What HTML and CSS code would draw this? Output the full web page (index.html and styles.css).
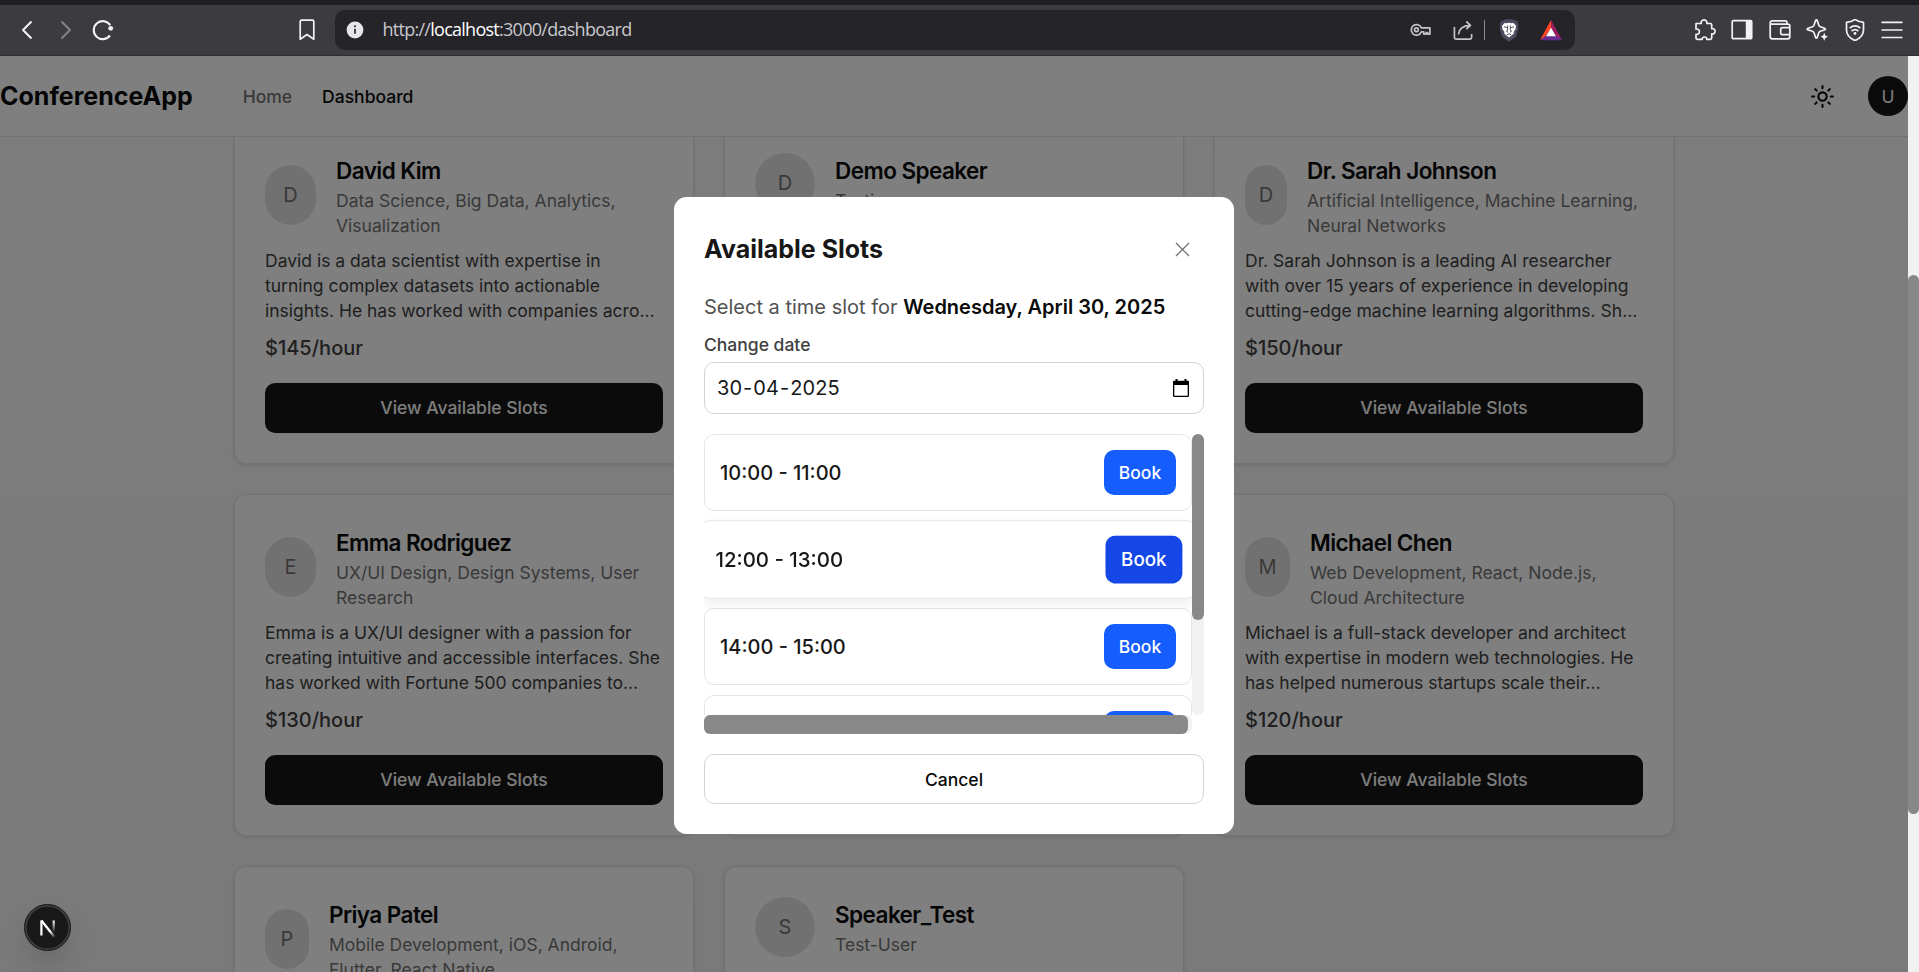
FILE: index.html
```html
<!DOCTYPE html>
<html lang="en">
<head>
<meta charset="utf-8">
<title>ConferenceApp</title>
<link rel="stylesheet" href="styles.css">
</head>
<body>
<div class="browser">
  <div class="toolbar">
    <div class="nav-icons">
      <svg class="i-back" width="12" height="20" viewBox="0 0 12 20"><path d="M10.500 1.500 2 10l8.500 8.500"/></svg>
      <svg class="i-fwd" width="12" height="20" viewBox="0 0 12 20"><path d="M1.500 1.500 10 10l-8.500 8.500"/></svg>
      <svg class="i-reload" width="22" height="22" viewBox="0 0 22 22"><path d="M18 16.500A9 9 0 1 1 18.300 6.200"/><circle cx="18.700" cy="9.300" r="2.400" class="solid"/></svg>
      <svg class="i-mark" width="16" height="22" viewBox="0 0 16 22"><path d="M1.200 2.500c0-.8.500-1.300 1.300-1.300h11c.8 0 1.300.5 1.300 1.300v17.800L8 15.500l-6.800 4.800z"/></svg>
    </div>
    <div class="urlbar">
      <svg class="i-info" width="18" height="18" viewBox="0 0 18 18"><circle cx="9" cy="9" r="8.400" fill="#e6e5ea"/><path d="M9 7.800v5" stroke="#29282d" stroke-width="1.700"/><circle cx="9" cy="5.300" r="1.050" fill="#29282d"/></svg>
      <div class="url">http://<b>localhost</b>:3000/dashboard</div>
      <div class="url-icons">
        <svg width="21" height="14" viewBox="0 0 21 14"><path d="M11.400 4.800A5.300 5.300 0 1 0 11.400 8.900h2.400v2.200h2.300V9.600h1.600v1.500h2.200V4.800z"/><circle cx="6.400" cy="6.800" r="1.900"/></svg>
        <svg class="i-share" width="21" height="21" viewBox="0 0 21 21"><path d="M1.400 7v10.500c0 1 .6 1.600 1.600 1.600h14c1 0 1.600-.6 1.600-1.600V14"/><path d="M5.500 14.500C6 8.500 9.500 5.500 17 5.300M13.300 1.500l4.200 3.800-4.200 3.900"/></svg>
        <span class="url-sep"></span>
        <svg class="i-brave" width="20" height="23" viewBox="0 0 20 23"><path fill="#4c4b60" d="M4.500 1.500 6.500.3h7l2 1.200 2.300.3 1.700 4-.6 2 .4 2-2.300 8L10 22.700 3 17.800.700 9.800l.4-2-.6-2 1.700-4z"/><path fill="#fff" d="M5.500 3.900 7.500 4.300 10 3.800l2.500.5 2-.4 2.600 3-.5 2 .2.900-2.200 3.300.2 1.600-1.700 1.200-3.100 2.500-3.100-2.500-1.700-1.200.2-1.600-2.200-3.300.2-.9-.5-2z"/><path fill="none" stroke="#4c4b60" stroke-width="1" d="m5 7.700 2.900.9M15 7.700l-2.900.9M8.600 6.500v4.200l-1 1.600 1.500.9M11.400 6.500v4.200l1 1.600-1.500.9M8 15.800l2-1 2 1"/></svg>
        <svg class="i-bat" width="24" height="21" viewBox="0 0 24 21"><path fill="#ff4724" d="M12 0v8.500L5.500 17.300 1 20z"/><path fill="#9e1f63" d="M12 0v8.500l6 8.500 5 3z"/><path fill="#662d91" d="M1 20.300 6.500 16h11l5.500 4.300z"/><path fill="#fff" d="m12 7.800 5 8.500H7z"/></svg>
      </div>
    </div>
    <div class="ext-icons">
      <svg viewBox="0 0 22 22"><path d="M2 4.500h5.200a2.900 2.900 0 1 1 5.600 0h3.700c.7 0 1.200.5 1.200 1.200v4a2.700 2.700 0 1 1 0 5.200V19c0 .8-.5 1.300-1.300 1.300h-3.600a2.300 2.300 0 1 0-4.600 0H3.300c-.8 0-1.300-.5-1.300-1.300v-3.700a2.700 2.700 0 1 0 0-5.200V4.500z"/></svg>
      <svg viewBox="0 0 22 22"><rect x="1.200" y="1.700" width="19.500" height="18" rx="1"/><path class="solid" d="M14.800 1.500h6v18.500h-6z"/></svg>
      <svg viewBox="0 0 22 22"><path d="M18 5V3.500c0-1-.6-1.700-1.600-1.700H3.200a2 2 0 0 0-2 2v14c0 1.300.8 2 2 2h15.600c1.200 0 2-.7 2-2V7.200c0-1.200-.8-2-2-2H3.200c-1 0-1.700-.4-1.900-1.200M20.800 8.700h-7.300c-1.200 0-1.800.7-1.800 1.800v3.300c0 1.200.6 1.800 1.800 1.800h7.300"/></svg>
      <svg viewBox="0 0 22 22"><path d="M9.500 1.700c.5-1.200 1.300-1.200 1.800 0l1.500 4.500c.3.800.7 1.200 1.500 1.500l4.200 1.500c1.300.5 1.300 1.200 0 1.700l-4.200 1.400c-.8.300-1.200.7-1.500 1.500l-1.500 4.300c-.5 1.300-1.300 1.300-1.800 0L8 13.800c-.3-.8-.7-1.200-1.500-1.500L2 10.900c-1.200-.5-1.200-1.200 0-1.700l4.500-1.500c.8-.3 1.200-.7 1.500-1.500z"/><path class="halo" d="m18.300 13.700 1.100 2.900 2.700 1.200-2.700 1.100-1.100 2.900-1.200-2.900-2.600-1.100 2.600-1.200z"/></svg>
      <svg viewBox="0 0 22 22"><path d="M11 .4c2.500 2 5 2.800 8.500 3V11c0 4.800-3.300 8.300-8.500 10.600C5.800 19.300 2.500 15.800 2.500 11V3.400C6 3.200 8.500 2.400 11 .4z"/><path d="M5.700 9.200c3.300-2.800 7.300-2.800 10.600 0M7.600 12c2.100-1.800 4.700-1.800 6.800 0"/><circle class="solid" cx="11" cy="14.500" r="1.400"/></svg>
      <svg viewBox="0 0 22 22"><path d="M.5 3.300h21M.5 11h21M.5 18.500h21"/></svg>
    </div>
  </div>

  <div class="window">
    <div class="page">
      <header class="site-header">
        <div class="brand">ConferenceApp</div>
        <nav class="links"><a>Home</a><a class="active">Dashboard</a></nav>
        <svg class="sun" width="25" height="25" viewBox="0 0 24 24"><circle cx="12" cy="12" r="4"/><path d="M12 2v2M12 20v2M4.930 4.930l1.410 1.410M17.660 17.660l1.410 1.410M2 12h2M20 12h2M6.340 17.660l-1.410 1.410M19.070 4.930l-1.410 1.410"/></svg>
        <div class="user">U</div>
      </header>
      <main class="cards">
        <article class="card">
          <div class="head"><div class="avatar w51">D</div><div class="who"><h3>David Kim</h3><p>Data Science, Big Data, Analytics, Visualization</p></div></div>
          <p class="bio">David is a data scientist with expertise in turning complex datasets into actionable insights. He has worked with companies acro…</p>
          <p class="price">$145/hour</p><button class="view">View Available Slots</button>
        </article>
        <article class="card">
          <div class="head"><div class="avatar">D</div><div class="who"><h3>Demo Speaker</h3><p>Testing</p></div></div>
        </article>
        <article class="card">
          <div class="head"><div class="avatar w42">D</div><div class="who"><h3>Dr. Sarah Johnson</h3><p>Artificial Intelligence, Machine Learning, Neural Networks</p></div></div>
          <p class="bio">Dr. Sarah Johnson is a leading AI researcher with over 15 years of experience in developing cutting-edge machine learning algorithms. Sh…</p>
          <p class="price">$150/hour</p><button class="view">View Available Slots</button>
        </article>
        <article class="card">
          <div class="head"><div class="avatar w51">E</div><div class="who"><h3>Emma Rodriguez</h3><p>UX/UI Design, Design Systems, User Research</p></div></div>
          <p class="bio">Emma is a UX/UI designer with a passion for creating intuitive and accessible interfaces. She has worked with Fortune 500 companies to…</p>
          <p class="price">$130/hour</p><button class="view">View Available Slots</button>
        </article>
        <article class="card"></article>
        <article class="card">
          <div class="head"><div class="avatar w45">M</div><div class="who"><h3>Michael Chen</h3><p>Web Development, React, Node.js, Cloud Architecture</p></div></div>
          <p class="bio">Michael is a full-stack developer and architect with expertise in modern web technologies. He has helped numerous startups scale their…</p>
          <p class="price">$120/hour</p><button class="view">View Available Slots</button>
        </article>
        <article class="card">
          <div class="head"><div class="avatar w44">P</div><div class="who"><h3>Priya Patel</h3><p>Mobile Development, iOS, Android, Flutter, React Native</p></div></div>
        </article>
        <article class="card">
          <div class="head"><div class="avatar">S</div><div class="who"><h3>Speaker_Test</h3><p>Test-User</p></div></div>
        </article>
      </main>
    </div>
    <div class="page-scroll"><div class="page-thumb"></div></div>

    <div class="overlay">
      <section class="modal">
        <div class="modal-head"><h2>Available Slots</h2>
          <svg width="15" height="15" viewBox="0 0 15 15"><path d="M1 1l13 13M14 1 1 14"/></svg></div>
        <p class="lead">Select a time slot for <strong>Wednesday, April 30, 2025</strong></p>
        <label class="label">Change date</label>
        <div class="date"><span><i>30</i>-<i>04</i>-<i>2025</i></span>
          <svg width="16" height="18" viewBox="0 0 16 18"><path d="M2.500 0h2v1.700h7V0h2v1.700H15c.6 0 1 .5 1 1.100v14c0 .7-.4 1.200-1 1.200H1c-.6 0-1-.5-1-1.200v-14c0-.6.4-1.100 1-1.100h1.500zM1.300 6v10.700h13.400V6z"/></svg></div>
        <div class="slots">
          <div class="slot-list">
            <div class="slot"><span>10:00 - 11:00</span><button class="book">Book</button></div>
            <div class="slot hovered"><span>12:00 - 13:00</span><button class="book">Book</button></div>
            <div class="slot"><span>14:00 - 15:00</span><button class="book">Book</button></div>
            <div class="slot"><span></span><button class="book"></button></div>
          </div>
          <div class="v-track"><div class="v-thumb"></div></div>
          <div class="h-track"><div class="h-thumb"></div></div>
        </div>
        <button class="cancel">Cancel</button>
      </section>
    </div>

    <div class="next-badge">
      <svg width="22" height="22" viewBox="0 0 22 22"><defs><linearGradient id="n1" x1="0" y1="0" x2="0" y2="1"><stop offset="0" stop-color="#fff"/><stop offset="1" stop-color="#fff" stop-opacity="0"/></linearGradient><linearGradient id="n2" x1="0" y1="0" x2="1" y2="1"><stop offset=".65" stop-color="#fff"/><stop offset="1" stop-color="#fff" stop-opacity=".1"/></linearGradient></defs><path d="M4.400 18.500v-15" stroke="#fff" stroke-width="2.200"/><path d="M4.400 3.500 17.500 20" stroke="url(#n2)" stroke-width="2.300"/><rect x="15.600" y="3.500" width="2.200" height="12" fill="url(#n1)"/></svg>
    </div>
  </div>
</div>
</body>
</html>
```
FILE: styles.css
```css
* { box-sizing: border-box; }
body { margin: 0; font-family: Inter, "Liberation Sans", sans-serif; color: #171717; overflow: hidden; }
h2, h3, p { margin: 0; }
button { font-family: inherit; border: 0; padding: 0; }
svg { display: block; flex: none; }
.browser { width: 1919px; height: 972px; display: flex; flex-direction: column; }

/* browser toolbar */
.toolbar { height: 56px; flex: none; background: #3c3b40; border-top: 5px solid #1f1e25; border-bottom: 1px solid #2f2e33; display: flex; align-items: center; }
.toolbar svg { fill: none; stroke: #f2f1f5; stroke-width: 1.7; stroke-linejoin: round; }
.toolbar .solid { fill: #f2f1f5; stroke: none; }
.toolbar .halo { fill: #f2f1f5; stroke: none; }
.nav-icons { width: 335px; flex: none; display: flex; align-items: center; padding-left: 21px; }
.toolbar .i-back, .toolbar .i-reload { stroke-width: 2.1; }
.toolbar .i-fwd { margin-left: 27px; stroke: #838287; stroke-width: 2; }
.i-reload { margin-left: 20px; }
.i-mark { margin-left: 184.5px; }
.urlbar { width: 1240px; height: 40px; flex: none; border-radius: 10px; background: #252429; display: flex; align-items: center; padding-left: 11px; }
.toolbar .i-info { stroke: none; }
.url { margin-left: 18.5px; padding-bottom: 2px; font: 18px/24px "Open Sans", "Noto Sans", sans-serif; color: #c9c8ce; letter-spacing: -.73px; white-space: nowrap; flex: 1; }
.url b { font-weight: 400; color: #fff; }
.url-icons { display: flex; align-items: center; width: 165.5px; flex: none; }
.toolbar .url-icons svg { stroke: #c4c3c8; }
.i-share { margin-left: 22px; }
.url-sep { width: 1px; height: 20px; background: #8b8a90; margin-left: 10px; }
.i-brave { margin-left: 14.5px; }
.i-bat { margin-left: 20px; }
.toolbar .url-icons .i-bat, .toolbar .url-icons .i-brave { stroke: none; }
.ext-icons { display: flex; gap: 15.4px; margin-left: 119px; }
.ext-icons svg { width: 22px; height: 22px; }

/* page */
.window { flex: 1; position: relative; display: flex; overflow: hidden; }
.page { width: 1908px; flex: none; height: 916px; overflow: hidden; background: linear-gradient(#fbfbfb, #f4f4f4); }
.site-header { height: 81px; position: relative; z-index: 1; background: radial-gradient(ellipse 260px 22px at 465px 33px, #fcfcfc 60%, #fff); border-bottom: 1px solid #e5e5e5; display: flex; align-items: center; color: #0a0a0a; }
.brand { font-size: 25px; font-weight: 700; line-height: 35px; }
.links { display: flex; gap: 30px; margin-left: 50px; font-size: 17.5px; font-weight: 500; flex: 1; }
.links a { color: #737373; }
.links .active { color: #0a0a0a; }
.sun { fill: none; stroke: #0a0a0a; stroke-width: 2; stroke-linecap: round; margin-right: 33px; }
.user { width: 40px; height: 40px; border-radius: 50%; background: #171717; color: #fafafa; display: flex; align-items: center; justify-content: center; font-size: 17.5px; }
.cards { margin: -15px 234px 0; display: grid; grid-template-columns: repeat(3, 460px); grid-auto-rows: 342px; gap: 30px; }
.card { background: #fff; border: 1px solid #e5e5e5; border-radius: 12.5px; padding: 30px; box-shadow: 0 1px 4px rgba(0, 0, 0, .12); }
.head { display: flex; align-items: center; gap: 20px; }
.avatar { width: 60px; height: 60px; flex: none; border-radius: 30px; background: #e3e3e3; color: #737373; display: flex; align-items: center; justify-content: center; font-size: 20px; }
.w51 { width: 51px; }
.w42 { width: 42px; }
.w44 { width: 44px; }
.w45 { width: 45px; }
.w51, .w42, .w44, .w45 { margin-bottom: 1px; }
.who { flex: 1; }
.who h3 { font-size: 22.5px; line-height: 35px; font-weight: 600; letter-spacing: -.56px; color: #0a0a0a; }
.who p { font-size: 17.5px; line-height: 25px; color: #737373; }
.bio { margin-top: 10px; font-size: 17.5px; line-height: 25px; color: #404040; }
.price { margin-top: 10px; font-size: 20px; line-height: 30px; font-weight: 500; color: #404040; }
.view { display: block; width: 100%; height: 50px; margin-top: 20px; padding-bottom: 1px; border-radius: 10px; background: #171717; color: #fafafa; font-size: 17.5px; font-weight: 500; }
.page-scroll { width: 11px; background: #f1f1f1; padding-top: 219px; position: relative; z-index: 3; }
.page-thumb { height: 539px; border-radius: 5.5px; background: #888; }

/* modal */
.overlay { position: absolute; inset: 0; z-index: 2; background: rgba(0, 0, 0, .5); }
.modal { width: 560px; height: 637px; margin: 141px 0 0 674px; border-radius: 12.5px; background: #fff; padding: 30px; }
.modal-head { height: 45px; display: flex; align-items: center; justify-content: space-between; padding-right: 14px; }
.modal-head h2 { font-size: 25px; line-height: 35px; font-weight: 700; }
.modal-head svg { fill: none; stroke: #737373; stroke-width: 1.3; }
.lead { margin-top: 20px; font-size: 20px; line-height: 30px; color: #525252; }
.lead strong { font-weight: 600; color: #0a0a0a; }
.label { display: block; margin-top: 10px; font-size: 17.5px; line-height: 25px; font-weight: 500; color: #404040; }
.date { height: 52px; margin-top: 5px; border: 1px solid #d4d4d4; border-radius: 10px; padding: 0 14px 0 11px; display: flex; align-items: center; justify-content: space-between; font-size: 20px; }
.date span { letter-spacing: .05px; }
.date i { font-style: normal; padding: 0 1px; }
.slots { height: 300px; margin-top: 20px; display: grid; grid-template: 281px 19px / 488px 12px; }
.slot-list { overflow: hidden; display: flex; flex-direction: column; gap: 10px; }
.slot { height: 77px; flex: none; border: 1px solid #e5e5e5; border-radius: 10px; padding: 0 15px; display: flex; align-items: center; justify-content: space-between; font-size: 20px; font-weight: 500; background: #fff; }
.book { width: 72px; height: 45px; border-radius: 10px; background: #155dfc; color: #fff; font-size: 17.5px; font-weight: 500; }
.hovered { transform: scale(1.02); box-shadow: 0 5px 12px -1px rgba(0, 0, 0, .07); }
.hovered .book { transform: scale(1.05); background: #1447e6; }
.v-track { background: #f1f1f1; border-radius: 6px; }
.v-thumb { height: 186px; border-radius: 6px; background: #888; }
.h-track { background: #f1f1f1; border-radius: 6px; }
.h-thumb { width: 484px; height: 19px; border-radius: 6px; background: #888; }
.cancel { display: block; width: 100%; height: 50px; margin-top: 20px; border: 1px solid #d4d4d4; border-radius: 10px; background: #fff; color: #0a0a0a; font-size: 17.5px; font-weight: 500; }

.next-badge { position: absolute; left: 24px; bottom: 21px; z-index: 4; width: 47px; height: 47px; border-radius: 50%; background: #191919; border: 1px solid #191919; box-shadow: inset 0 0 0 1.5px #454545, 0 16px 32px -8px rgba(0, 0, 0, .24); display: flex; align-items: center; justify-content: center; }
```
